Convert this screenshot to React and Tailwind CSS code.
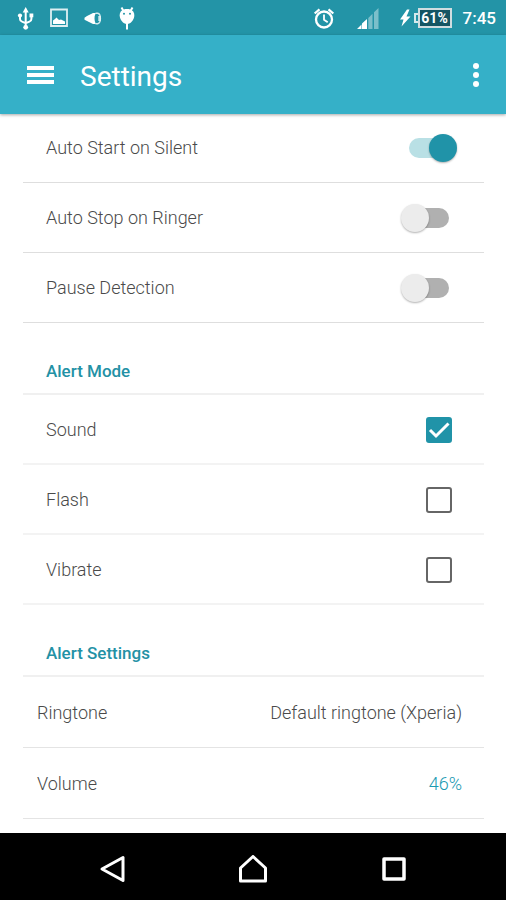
// src/App.jsx
// Settings screen: status bar, app bar, the settings list and the
// system navigation bar.

import { useState } from "react";

const SWITCHES = [
  { id: "autoStart", label: "Auto Start on Silent" },
  { id: "autoStop", label: "Auto Stop on Ringer" },
  { id: "pause", label: "Pause Detection" },
];

const ALERT_MODES = [
  { id: "sound", label: "Sound" },
  { id: "flash", label: "Flash" },
  { id: "vibrate", label: "Vibrate" },
];

function StatusBar() {
  return (
    <div className="flex h-[35px] items-center justify-between bg-[#2394a7] pl-4 pr-[10px] text-white">
      <div className="flex items-center gap-4">
        {/* USB */}
        <svg className="h-6 w-[18px]" viewBox="0 0 18 24" fill="none" stroke="currentColor" strokeWidth="2">
          <path d="M9.700 5v17M4 9v4q0 2 2 2.600l3.700 1.600 3.700-1.600q2-.6 2-2.600V9" />
          <path d="M9.700 1 12.700 6.500H6.700z" fill="currentColor" stroke="none" />
          <circle cx="9.700" cy="21.300" r="2.400" fill="currentColor" stroke="none" />
          <circle cx="4" cy="9.500" r="2.100" fill="currentColor" stroke="none" />
          <path d="M13.500 7.500h3.800v3.800h-3.800z" fill="currentColor" stroke="none" />
        </svg>
        {/* Screenshot */}
        <svg className="h-6 w-[18px]" viewBox="0 0 18 24">
          <path d="M1 3.500h16v16.500H1z" fill="none" stroke="currentColor" strokeOpacity="0.85" strokeWidth="1.800" />
          <path d="M3 18v-3.500l2-1.500 1.500-1.500 2.500 2.500 2-.5 4 2V18z" fill="currentColor" />
        </svg>
        {/* Whistle */}
        <svg className="h-6 w-[18px]" viewBox="0 0 18 24" fill="currentColor">
          <path d="M.5 11.800 3 10 9 7h2.800q-1.300 2.500-1.300 5.500t1.300 5.500H9L3 15 .5 13.800z" />
          <path d="M11.500 7.300h2.200q2.700.5 2.700 5.200t-2.700 5.200h-2.200" fill="none" stroke="currentColor" strokeWidth="1.400" strokeOpacity="0.8" />
          <path d="M14.200 10h2.300v5h-2.300z" fillOpacity="0.7" />
        </svg>
        {/* Debugging */}
        <svg className="h-6 w-[18px]" viewBox="0 0 18 24" fill="currentColor">
          <path d="M3.500 1.500 5.500 5M14.500 1.500 12.500 5M9 16v7.500" stroke="currentColor" strokeWidth="2" />
          <path d="M9 3c4.700 0 7.300 2.400 7.300 6.200 0 4-3 7.600-5.500 8.600H7.200C4.700 16.800 1.700 13.200 1.700 9.200 1.700 5.400 4.300 3 9 3z" />
          <circle cx="6" cy="7.800" r="1" fill="#2394a7" />
          <circle cx="12" cy="7.800" r="1" fill="#2394a7" />
        </svg>
      </div>

      <div className="flex items-center">
        {/* Alarm */}
        <svg className="mr-[22px] h-6 w-[22px]" viewBox="0 0 22 24" fill="none" stroke="currentColor" strokeWidth="2.300">
          <circle cx="11" cy="13.500" r="8" />
          <path d="M1.700 7.500 6.500 3.300M20.300 7.500 15.500 3.300" />
          <path d="M11 8.500v5.200l3.700 2.500" strokeWidth="1.800" />
        </svg>
        {/* Signal */}
        <svg className="mr-5 h-6 w-[22px]" viewBox="0 0 22 24" fill="currentColor">
          <path d="M0 23 4.500 18.500V23zM5 17.500 10 13v10H5z" />
          <path d="M11.300 12 15.500 7.800V23h-4.200zM17 6.300 21.500 2v21H17z" fillOpacity="0.4" />
        </svg>
        {/* Battery */}
        <svg className="mr-[3px] h-5 w-3" viewBox="0 0 12 20" fill="currentColor">
          <path d="M8 1.500 1 11.500h3.500L2.500 18.500 11.500 8.500H7.500L10.500 1.500z" />
        </svg>
        <div className="mr-[11px] flex items-center">
          <span className="h-[10px] w-1 border-y-2 border-l-2 border-white/80" />
          <span className="flex h-5 w-[34px] items-center justify-center border-2 border-white/80 bg-[#145563] font-bold text-[14px] leading-4">
            61%
          </span>
        </div>
        <span className="text-[17px] font-medium leading-6">7:45</span>
      </div>
    </div>
  );
}

function AppBar() {
  return (
    <header className="relative flex h-[79px] items-center justify-between bg-[#35b0c8] pl-[26px] pr-4 text-white shadow-[0_1px_3px_rgba(0,0,0,0.35)]">
      <div className="flex items-center gap-[26px]">
        <button type="button" aria-label="Open menu" className="flex h-7 w-7 flex-col items-center justify-center gap-[3px]">
          <span className="h-1 w-[27px] bg-current" />
          <span className="h-1 w-[27px] bg-current" />
          <span className="h-1 w-[27px] bg-current" />
        </button>
        <h1 className="pt-1 text-[28px] leading-8">Settings</h1>
      </div>
      <button type="button" aria-label="More options" className="flex h-8 w-7 flex-col items-center justify-center gap-[3px]">
        <span className="h-[6px] w-[6px] rounded-full bg-current" />
        <span className="h-[6px] w-[6px] rounded-full bg-current" />
        <span className="h-[6px] w-[6px] rounded-full bg-current" />
      </button>
    </header>
  );
}

function SwitchRow({ label, checked, onChange }) {
  return (
    <label className="flex h-[70px] items-center justify-between border-b border-[#dedede] pl-[23px] pr-[35px] pt-px">
      <span>{label}</span>
      <input
        type="checkbox"
        role="switch"
        checked={checked}
        onChange={onChange}
        className="relative h-5 w-10 appearance-none rounded-full bg-[#b0b0b0] before:absolute before:-left-2 before:-top-1 before:h-7 before:w-7 before:rounded-full before:bg-[#ececec] before:shadow-[0_1px_2px_rgba(0,0,0,0.3)] checked:bg-[#b9e0e5] checked:before:left-5 checked:before:bg-[#2093a8]"
      />
    </label>
  );
}

function CheckRow({ label, checked, onChange }) {
  return (
    <label className="flex h-[70px] items-center justify-between border-b-2 border-[#f3f3f3] pl-[23px] pr-8 pt-[2px]">
      <span>{label}</span>
      <span className="relative flex">
        <input
          type="checkbox"
          checked={checked}
          onChange={onChange}
          className="h-[26px] w-[26px] appearance-none rounded-[3px] border-2 border-[#666] checked:border-[#2093a8] checked:bg-[#2093a8]"
        />
        {checked && (
          <svg className="pointer-events-none absolute inset-0 h-full w-full" viewBox="0 0 26 26" fill="none" stroke="#fff" strokeWidth="3">
            <path d="m4 13 6 6L22.500 6.500" />
          </svg>
        )}
      </span>
    </label>
  );
}

function ValueRow({ label, value, valueClass }) {
  return (
    <button type="button" className="flex h-[71px] w-full items-center justify-between border-b border-[#e4e4e4] pl-[14px] pr-[22px] pt-[2px] text-left">
      <span>{label}</span>
      <span className={valueClass}>{value}</span>
    </button>
  );
}

function SectionTitle({ children }) {
  return (
    <h2 className="flex h-[72px] items-end border-b-2 border-[#f0f0f0] pb-[10px] pl-[23px] text-[17px] font-medium leading-6 text-[#2391a5]">
      {children}
    </h2>
  );
}

function NavBar() {
  return (
    <nav className="mt-auto flex h-[67px] items-center justify-evenly bg-black pt-1 text-white">
      <button type="button" aria-label="Back" className="flex h-12 w-14 items-center justify-center">
        <svg className="h-7 w-7" viewBox="0 0 28 28" fill="none" stroke="currentColor" strokeWidth="3" strokeLinejoin="round">
          <path d="M24 2.500v23L3 14z" />
        </svg>
      </button>
      <button type="button" aria-label="Home" className="flex h-12 w-14 items-center justify-center">
        <svg className="h-7 w-7" viewBox="0 0 28 28" fill="none" stroke="currentColor" strokeWidth="3" strokeLinejoin="round">
          <path d="M14 1.500 1.500 13v13h25V13z" />
        </svg>
      </button>
      <button type="button" aria-label="Recent apps" className="flex h-12 w-14 items-center justify-center">
        <svg className="h-7 w-7" viewBox="0 0 28 28" fill="none" stroke="currentColor" strokeWidth="3.500" strokeLinejoin="round">
          <path d="M4 4h20v20H4z" />
        </svg>
      </button>
    </nav>
  );
}

export default function App() {
  const [settings, setSettings] = useState({ autoStart: true, sound: true });

  const toggle = (id) => setSettings((prev) => ({ ...prev, [id]: !prev[id] }));

  return (
    <div className="flex min-h-screen flex-col bg-white font-['Roboto',sans-serif]">
      <StatusBar />
      <AppBar />

      <main className="-mt-px mb-3 ml-[23px] mr-[22px] text-[18px] font-light leading-6 text-[#4a4a4a]">
        {SWITCHES.map((s) => (
          <SwitchRow key={s.id} label={s.label} checked={!!settings[s.id]} onChange={() => toggle(s.id)} />
        ))}

        <SectionTitle>Alert Mode</SectionTitle>
        {ALERT_MODES.map((m) => (
          <CheckRow key={m.id} label={m.label} checked={!!settings[m.id]} onChange={() => toggle(m.id)} />
        ))}

        <SectionTitle>Alert Settings</SectionTitle>
        <ValueRow label="Ringtone" value="Default ringtone (Xperia)" />
        <ValueRow label="Volume" value="46%" valueClass="text-[#1a9ab2]" />
      </main>

      <NavBar />
    </div>
  );
}
